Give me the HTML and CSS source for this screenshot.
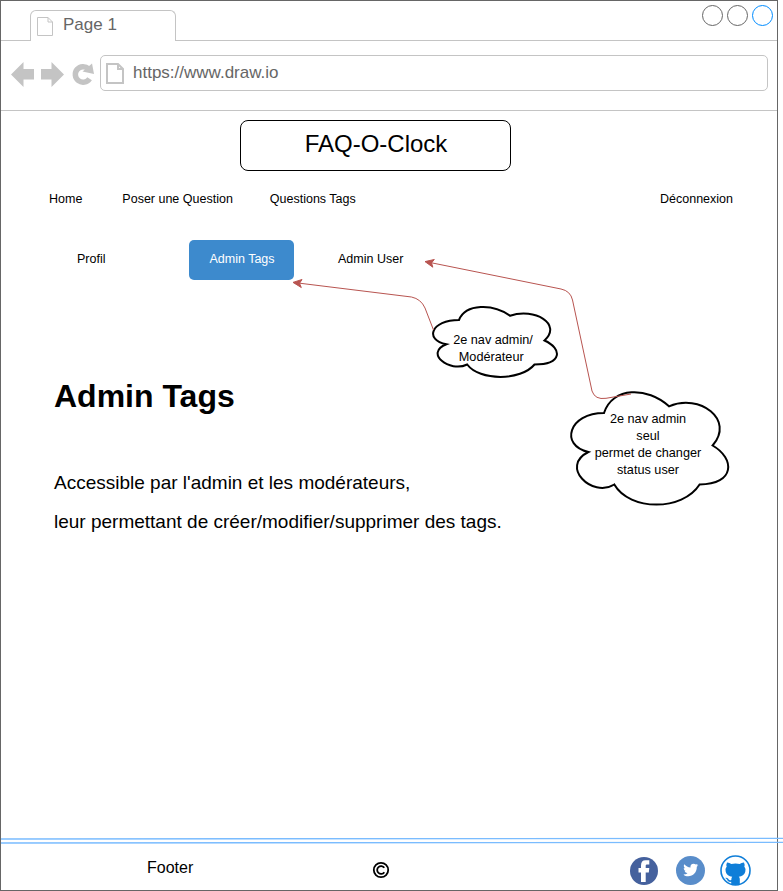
FILE: index.html
```html
<!DOCTYPE html>
<html lang="fr">
<head>
<meta charset="utf-8">
<title>FAQ-O-Clock</title>
<link rel="stylesheet" href="styles.css">
</head>
<body>
<div class="window">
  <header class="tabbar">
    <div class="tab">
      <svg class="tab-icon" width="18" height="20" viewBox="0 0 18 20"><path d="M1.500 1.500H12L16.500 6V19.500H1.500ZM12 1.500V6H16.500"/></svg>
      <span class="tab-title">Page 1</span>
    </div>
    <div class="controls"><i class="dot"></i><i class="dot"></i><i class="dot dot-blue"></i></div>
  </header>
  <div class="toolbar">
    <svg class="nav-icons" width="86" height="28" viewBox="0 0 86 28">
      <path d="M0 14.500L12.500 2V9H23V19.500H12.500V27Z"/>
      <path d="M53 14.500L40.500 2V9H30V19.500H40.500V27Z"/>
      <path class="reload" d="M78.600 18.800A7.800 7.800 0 1 1 77.500 8.800"/>
      <path d="M81 3.500L83 14L71.500 11.500Z"/>
    </svg>
    <div class="address">
      <svg class="page-icon" width="18" height="21" viewBox="0 0 18 21"><path d="M1 1H12L17 6V20H1ZM12 1V6H17"/></svg>
      <span class="url">https://www.draw.io</span>
    </div>
  </div>
  <main class="page">
    <div class="brand"><span>FAQ-O-Clock</span></div>
    <nav class="menu">
      <a class="home">Home</a><a class="ask">Poser une Question</a><a class="tags">Questions Tags</a><a class="logout">Déconnexion</a>
    </nav>
    <nav class="submenu">
      <a class="profile">Profil</a><a class="active">Admin Tags</a><a class="users">Admin User</a>
    </nav>
    <section class="intro">
      <h1>Admin Tags</h1>
      <p>Accessible par l'admin et les modérateurs,</p>
      <p>leur permettant de créer/modifier/supprimer des tags.</p>
    </section>
  </main>
  <footer class="footer">
    <span class="footer-label">Footer</span>
    <svg class="copyright" width="18" height="18" viewBox="0 0 18 18"><circle cx="9" cy="9" r="7.200"/><path d="M12.300 6.800A3.900 3.900 0 1 0 12.300 11.200"/></svg>
    <div class="social">
      <svg width="28" height="28" viewBox="0 0 28 28"><circle cx="14" cy="14" r="14" fill="#45619d"/><path fill="#fff" d="M11 25V15.500H8.500V11H11V8.500C11 5 12.500 3.300 15.500 3.300H19.300V7.500H17.200C16 7.500 15.700 8 15.700 9V11H19.300L18.800 15.500H15.700V25Z"/></svg>
      <svg width="29" height="29" viewBox="0 0 29 29"><circle cx="14.500" cy="14.500" r="14.500" fill="#598dca"/><path fill="#fff" d="M7.500 18.400C9.200 18.500 10.300 18 11.500 17.200C10 17 9 16.300 8.700 15.100H10C8.500 14.500 7.700 13.400 7.800 11.900L9 12.300C7.700 11.200 7.500 9.500 8.300 8.300C10 10.300 12 11.300 14.500 11.500C14 9.100 15.600 7.700 17.500 7.700C18.500 7.700 19.200 8.100 19.800 8.600L21.700 7.900L20.700 9.600L22.300 9.200L20.800 10.800C21 16.200 17.100 20.300 12.200 20.300C10.300 20.300 8.700 19.800 7.500 18.400Z"/></svg>
      <svg width="31" height="31" viewBox="0 0 31 31"><circle cx="15.500" cy="15.500" r="14.500" fill="#fff" stroke="#0f7ed8" stroke-width="1.600"/><path fill="#0f7ed8" d="M7 7.500C8.500 7.400 10 8.200 11.300 9Q15.500 8 19.700 9C21 8.200 22.500 7.400 24 7.500Q25 9.500 24.300 11.500Q26 13.500 25.300 16.500C24.500 20 22 21.300 18.800 21.700Q19.800 22.700 19.800 24V29.300Q15.500 30.700 11.200 29.300V26.800C8.800 27.200 7.700 26 7 24.500Q6.400 23.500 5.300 23C7 22.500 8 23.500 8.700 24.500Q9.600 25.700 11.300 25Q11.300 22.700 12.200 21.700C9 21.300 6.500 20 5.700 16.500Q5 13.500 6.700 11.500Q6 9.500 7 7.500Z"/></svg>
    </div>
  </footer>
</div>
<svg class="overlay" width="783" height="891" viewBox="0 0 783 891">
  <g class="rules"><path d="M1 839L783 838.300M1 843L783 842.300"/></g>
  <g class="cloud">
    <path d="M459 320C431 320 424 340 446.400 344.300C424 353 449.500 373 467.200 364.500C479.400 381 521 381 534.500 364.500C562.500 364.500 562.500 348.500 544.500 340.500C562.500 324 534.500 307.500 510 315.800C493 303.500 465.800 303.500 459 320Z"/>
    <path d="M604 413C568.500 413 559.500 445.500 588.400 452C559.500 466.300 591.900 498.300 614.300 484.500C629.900 511.300 682.500 511.300 699.600 484.500C735.200 484.500 735.200 458.500 712.600 445.500C735.200 419.500 699.600 393 669 406.300C647.200 386.500 612.600 386.500 604 413Z"/>
  </g>
  <g class="wire">
    <path d="M433.500 330L425 308Q421 299 411.500 297L298 283"/>
    <path d="M631 394L606 398.300Q595 400 592 391L572.500 300Q570.500 291 561 289L430 262.500"/>
  </g>
  <path class="head" d="M293 282.400L302 279.500L299.500 283.300L301.300 287.500Z"/>
  <path class="head" d="M425 261.600L434.300 259.500L431.500 262.900L432.800 267.200Z"/>
</svg>
<div class="note note-moderator">2e nav admin/<br>Modérateur&nbsp;</div>
<div class="note note-admin">2e nav admin<br>seul<br>permet de changer<br>status user</div>
</body>
</html>
```
FILE: styles.css
```css
* { box-sizing: border-box; }
body { margin: 0; background: #fff; color: #000; font-family: "Liberation Sans", Arial, sans-serif; position: relative; width: 783px; height: 891px; overflow: hidden; }
svg { display: block; flex: none; }
.window { width: 778px; height: 891px; border: 1px solid #666; display: flex; flex-direction: column; }
.tabbar { height: 40px; flex: none; border-bottom: 1px solid #c4c4c4; display: flex; justify-content: space-between; padding: 0 4px 0 29px; }
.tab { width: 146px; height: 31px; margin-top: 9px; border: 1px solid #c4c4c4; border-bottom: 0; border-radius: 6px 6px 0 0; background: #fff; display: flex; padding: 5px 0 0 5px; }
.tab-icon path { fill: #fff; stroke: #c4c4c4; }
.tab-title { margin: -1px 0 0 9px; font-size: 17px; line-height: 20px; color: #666; }
.controls { display: flex; gap: 4px; padding-top: 4px; }
.dot { width: 21px; height: 21px; border: 1px solid #666; border-radius: 50%; }
.dot-blue { border-color: #008cff; }
.toolbar { height: 70px; flex: none; border-bottom: 1px solid #c4c4c4; display: flex; padding: 14px 9px 0 10px; }
.nav-icons { margin-top: 5px; fill: #c4c4c4; }
.nav-icons .reload { fill: none; stroke: #c4c4c4; stroke-width: 5.5; }
.address { height: 36px; margin-left: 3px; flex: 1; border: 1px solid #c4c4c4; border-radius: 5px; display: flex; padding: 7px 0 0 5px; }
.page-icon path { fill: #fff; stroke: #c4c4c4; stroke-width: 2; }
.url { font-size: 17px; line-height: 20px; color: #666; margin-left: 9px; }
.page { flex: 1; }
.brand { width: 271px; height: 51px; margin: 9px 0 0 239px; border: 1px solid #000; border-radius: 8px; text-align: center; font-size: 24px; line-height: 46px; padding-left: 1px; }
.menu { display: flex; margin-top: 20px; padding: 0 44px 0 48px; font-size: 12.5px; line-height: 16px; }
.ask { margin-left: 40px; }
.tags { margin-left: 37px; }
.logout { margin-left: auto; }
.submenu { display: flex; margin-top: 33px; padding-left: 76px; font-size: 12.5px; line-height: 38px; }
.profile { width: 112px; }
.active { width: 105px; height: 40px; border-radius: 5px; background: #3d8acd; color: #fff; text-align: center; padding-left: 1px; }
.users { margin-left: 44px; }
.intro { padding: 97px 0 0 53px; }
.intro h1 { margin: 0 0 57px; font-size: 32px; line-height: 38px; }
.intro p { margin: 0 0 17px; font-size: 19px; line-height: 22px; }
.footer { height: 48px; flex: none; display: flex; padding-left: 146px; }
.footer-label { margin-top: 16px; width: 225px; font-size: 16px; line-height: 20px; }
.copyright { margin-top: 19px; fill: none; stroke: #000; stroke-width: 1.8; }
.social { margin: 13px 26px 0 auto; display: flex; align-items: center; height: 31px; }
.social svg + svg { margin-left: 18px; }
.social svg:last-child { margin-left: 15px; }
.overlay { position: absolute; left: 0; top: 0; fill: none; }
.rules { stroke: #7abcff; stroke-width: 1.3; }
.cloud { fill: #fff; stroke: #000; stroke-width: 2; }
.wire { stroke: #b85450; stroke-width: 1; }
.head { fill: #b85450; stroke: #b85450; stroke-width: 1; }
.note { position: absolute; text-align: center; font-size: 12.7px; line-height: 17px; white-space: nowrap; }
.note-moderator { left: 443px; top: 332px; width: 100px; }
.note-admin { left: 588px; top: 411px; width: 120px; }
```
